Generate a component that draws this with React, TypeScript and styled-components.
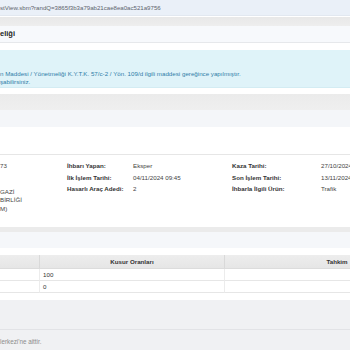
import styled, { createGlobalStyle } from 'styled-components';

const GlobalStyle = createGlobalStyle`
  html, body {
    margin: 0;
    padding: 0;
    background: #ffffff;
    overflow: hidden;
  }
  body {
    font-family: "Liberation Sans", Arial, sans-serif;
    width: 350px;
    height: 350px;
  }
`;

const Page = styled.div`
  width: 350px;
  height: 350px;
  display: flex;
  flex-direction: column;
  overflow: hidden;
  white-space: nowrap;
`;

const UrlBar = styled.div`
  height: 15px;
  line-height: 15px;
  background: #eaf0f8;
  border-bottom: 1px solid #e2e8f0;
  color: #5d646d;
  font-size: 6.1px;
  margin-bottom: 1px;
`;

const Strip = styled.div<{ $h: number; $bg: string }>`
  height: ${(p) => p.$h}px;
  background: ${(p) => p.$bg};
  flex-shrink: 0;
`;

const PanelHeading = styled.div`
  height: 16px;
  line-height: 16px;
  background: #f7f9fc;
  border-bottom: 1px solid #e6e8eb;
  font-size: 7.5px;
  font-weight: bold;
  color: #222;
`;

const Spacer = styled.div<{ $h: number }>`
  height: ${(p) => p.$h}px;
  flex-shrink: 0;
`;

const Alert = styled.div`
  background: #dff3f9;
  border-bottom: 1px solid #d3ecf3;
  padding: 20px 0 3px;
  color: #2f7da8;
  font-size: 6.2px;
  line-height: 7.5px;
  height: 38px;
  box-sizing: border-box;
`;

const InfoGrid = styled.div`
  border-top: 1px solid #e6e6e6;
  padding-top: 5px;
  display: grid;
  grid-template-columns: 67px 66px 99px 89px 1fr;
  align-items: start;
  font-size: 6.2px;
  line-height: 11.5px;
  color: #444;
`;

const Label = styled.div`
  font-weight: bold;
  color: #333;
`;

const Value = styled.div``;

const MultiValue = styled.div`
  padding-top: 4.5px;
  line-height: 8.5px;
`;

const Table = styled.div`
  display: grid;
  grid-template-columns: 40px 185px 225px;
  font-size: 6.2px;
  color: #333;
`;

const HeadCell = styled.div`
  height: 14px;
  line-height: 14px;
  background: linear-gradient(#ededed, #e6e6e6);
  border-right: 1px solid #d9d9d9;
  border-bottom: 1px solid #dcdcdc;
  box-sizing: border-box;
  font-weight: bold;
  text-align: center;
  color: #333;
`;

const Cell = styled.div`
  height: 12px;
  line-height: 12px;
  padding-left: 3px;
  border-right: 1px solid #ececec;
  border-bottom: 1px solid #e6e6e6;
  box-sizing: border-box;
`;

const Footer = styled.div`
  flex: 1;
  background: #f0f1f3;
  display: flex;
  flex-direction: column;
`;

const FooterTop = styled.div`
  height: 29px;
  border-bottom: 1px solid #e2e3e6;
`;

const FooterText = styled.div`
  padding-top: 8px;
  font-size: 6.3px;
  line-height: 8px;
  color: #8c8c8c;
`;

export default function App() {
  return (
    <Page>
      <GlobalStyle />
      <UrlBar>stView.sbm?randQ=3865f3b3a79ab21cae8ea0ac521a9756</UrlBar>
      <Strip $h={9} $bg="linear-gradient(#e8e8e8, #eeeeee)" />
      <PanelHeading>eliği</PanelHeading>
      <Spacer $h={7} />
      <Alert>
        <div>n Maddesi / Yönetmeliği K.Y.T.K. 57/c-2 / Yön. 109/d ilgili maddesi gereğince yapılmıştır.</div>
        <div>şabilirsiniz.</div>
      </Alert>
      <Spacer $h={6} />
      <Strip $h={16} $bg="linear-gradient(#ebebeb, #efefef)" />
      <Strip $h={17} $bg="#f4f6f9" />
      <Spacer $h={27} />
      <InfoGrid>
        <Value>73</Value>
        <Label>İhbarı Yapan:</Label>
        <Value>Eksper</Value>
        <Label>Kaza Tarihi:</Label>
        <Value>27/10/2024</Value>

        <Value />
        <Label>İlk İşlem Tarihi:</Label>
        <Value>04/11/2024 09:45</Value>
        <Label>Son İşlem Tarihi:</Label>
        <Value>13/11/2024</Value>

        <MultiValue>
          <div>GAZİ</div>
          <div>BİRLİĞİ</div>
          <div>M)</div>
        </MultiValue>
        <Label>Hasarlı Araç Adedi:</Label>
        <Value>2</Value>
        <Label>İhbarla İlgili Ürün:</Label>
        <Value>Trafik</Value>
      </InfoGrid>
      <Spacer $h={14} />
      <Strip $h={5} $bg="#ebebeb" />
      <Strip $h={16} $bg="#f5f7fa" />
      <Spacer $h={7} />
      <Table>
        <HeadCell />
        <HeadCell>Kusur Oranları</HeadCell>
        <HeadCell>Tahkim</HeadCell>
        <Cell />
        <Cell>100</Cell>
        <Cell />
        <Cell />
        <Cell>0</Cell>
        <Cell />
      </Table>
      <Spacer $h={7} />
      <Footer>
        <FooterTop />
        <FooterText>lerkezi'ne aittir.</FooterText>
      </Footer>
    </Page>
  );
}
